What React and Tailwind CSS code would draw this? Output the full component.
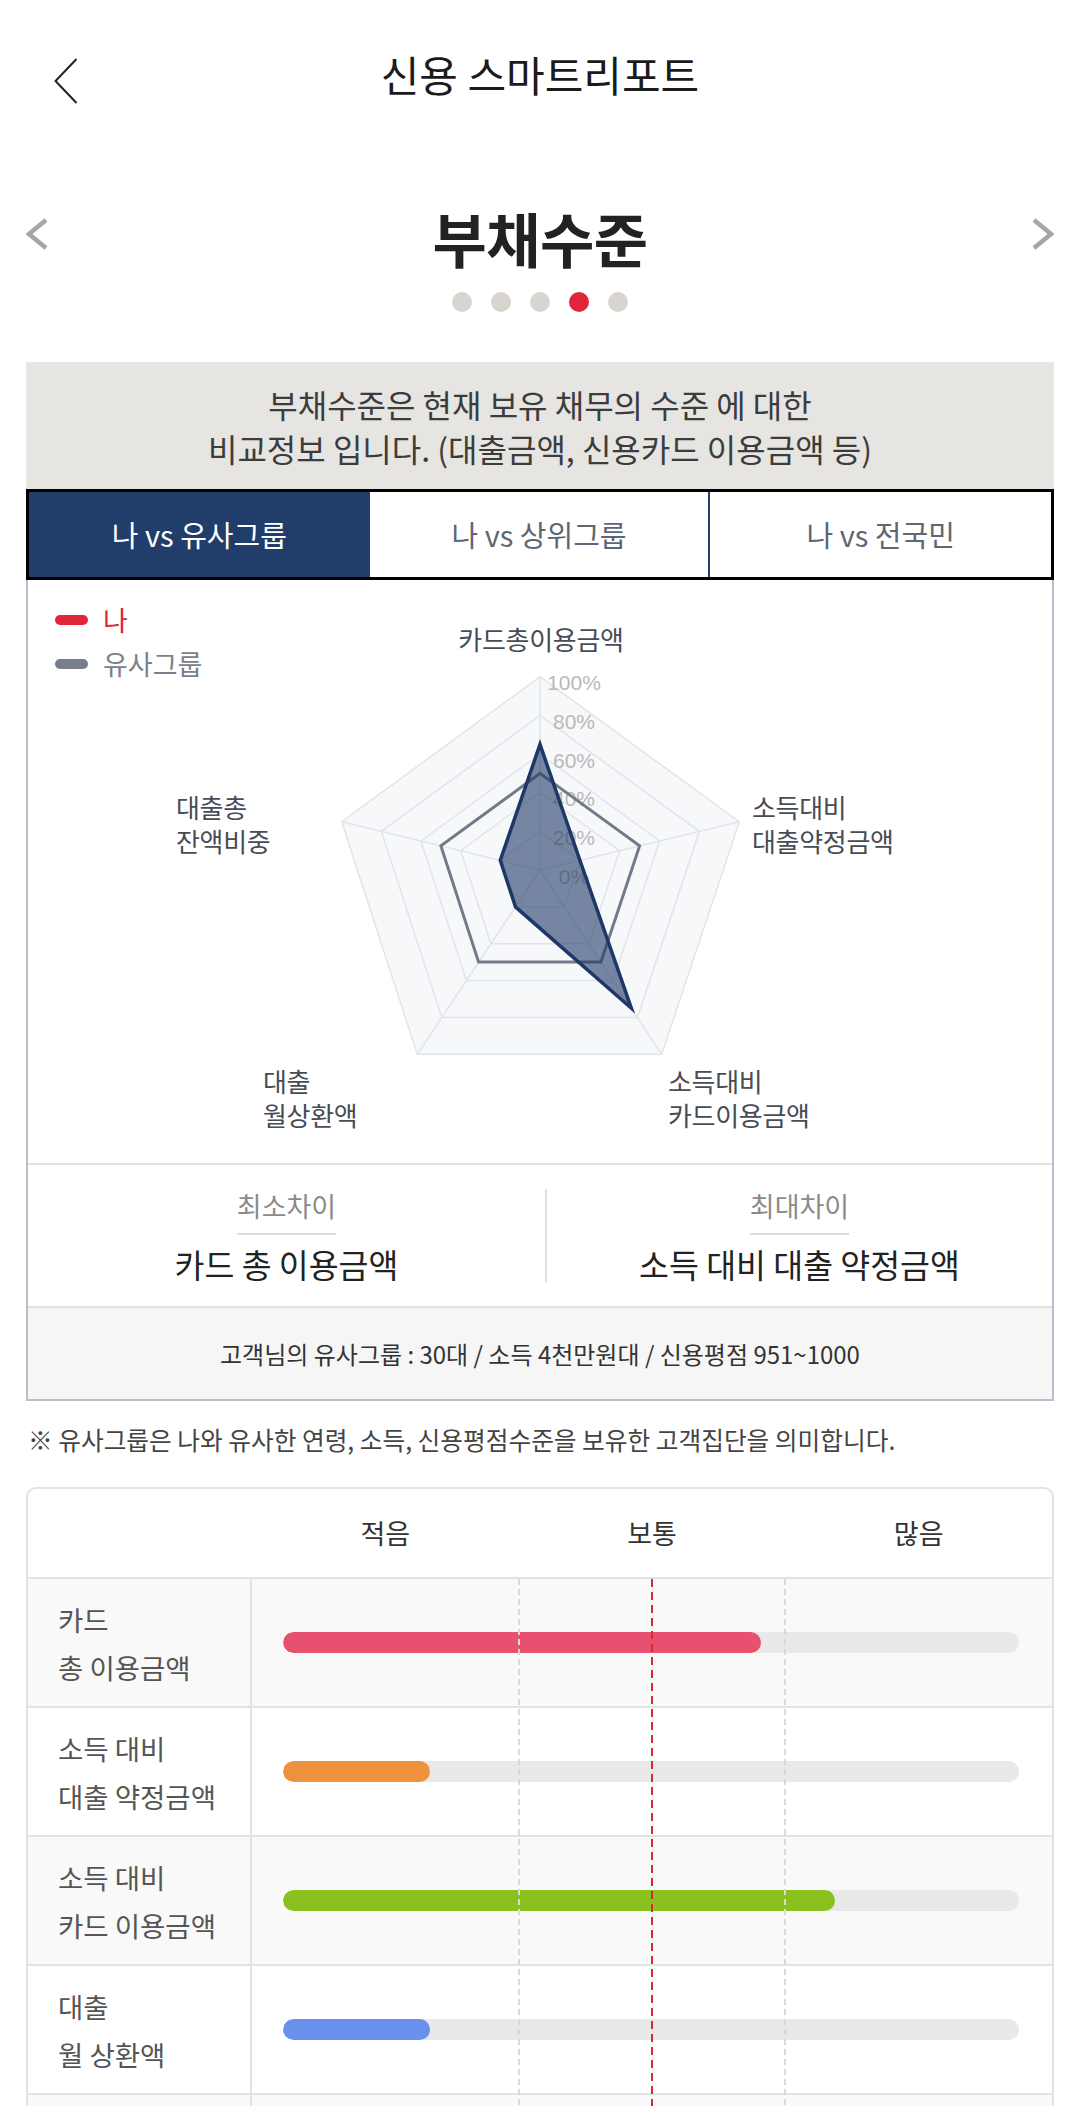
import React from "react";
import clsx from "clsx";

// radar geometry, page coordinates (spokes meet at CENTER)
const CENTER = [540, 870];
const OUTER = [
  [540, 676.7],
  [739.3, 821.7],
  [661.7, 1054.3],
  [417.3, 1054.3],
  [341.7, 821.7],
];

const point = (i, f) => [
  CENTER[0] + (OUTER[i][0] - CENTER[0]) * f,
  CENTER[1] + (OUTER[i][1] - CENTER[1]) * f,
];

const toPoints = (vals) =>
  vals.map((f, i) => point(i, f).map((n) => n.toFixed(1)).join(",")).join(" ");

const MY_VALUES = [0.65, 0.2, 0.75, 0.2, 0.2];
const GROUP_VALUES = [0.5, 0.5, 0.5, 0.5, 0.5];

const AXIS_LABELS = [
  { x: 541, y: 638, lines: ["카드총이용금액"], anchor: "middle" },
  { x: 752, y: 806, lines: ["소득대비", "대출약정금액"] },
  { x: 668, y: 1080, lines: ["소득대비", "카드이용금액"] },
  { x: 263, y: 1080, lines: ["대출", "월상환액"] },
  { x: 176, y: 806, lines: ["대출총", "잔액비중"] },
];

const BARS = [
  { label: ["카드", "총 이용금액"], value: 0.65, color: "bg-[#e8506f]" },
  { label: ["소득 대비", "대출 약정금액"], value: 0.2, color: "bg-[#ef923e]" },
  { label: ["소득 대비", "카드 이용금액"], value: 0.75, color: "bg-[#8bc11f]" },
  { label: ["대출", "월 상환액"], value: 0.2, color: "bg-[#6890ec]" },
  { label: ["대출총", "잔액비중"], value: 0.2, color: "bg-[#9a7bd8]" },
];

const RadarChart = () => {
  const rings = [1, 0.8, 0.6, 0.4, 0.2];
  const ticks = [0, 20, 40, 60, 80, 100];

  return (
    <svg width="1024" height="583" viewBox="28 580 1024 583" className="block">
      <polygon points={toPoints([1, 1, 1, 1, 1])} fill="#f7f8fa" />
      {rings.map((r) => (
        <polygon
          key={r}
          points={toPoints([r, r, r, r, r])}
          fill="none"
          stroke="#e1e4e9"
          strokeWidth="1.5"
        />
      ))}
      {OUTER.map((v, i) => (
        <line
          key={i}
          x1={CENTER[0]}
          y1={CENTER[1]}
          x2={v[0]}
          y2={v[1]}
          stroke="#e1e4e9"
          strokeWidth="1.5"
        />
      ))}
      {ticks.map((t) => (
        <text
          key={t}
          x="574"
          y={870 - (t / 100) * 193.3 + 6}
          textAnchor="middle"
          dominantBaseline="central"
          fontSize="21"
          fill="#b9b9b9"
          fontFamily="'Liberation Sans', Arial, sans-serif"
        >
          {t}%
        </text>
      ))}
      <polygon
        points={toPoints(GROUP_VALUES)}
        fill="none"
        stroke="#737988"
        strokeWidth="3"
      />
      <polygon
        points={toPoints(MY_VALUES)}
        fill="#1f3a68"
        fillOpacity="0.6"
        stroke="#1d3866"
        strokeWidth="3.5"
      />
      {AXIS_LABELS.map((l, i) =>
        l.lines.map((line, j) => (
          <text
            key={`${i}-${j}`}
            x={l.x}
            y={l.y + j * 34}
            textAnchor={l.anchor || "start"}
            dominantBaseline="central"
            fontSize="26"
            letterSpacing="-0.3"
            fill="#474c55"
            fontFamily="'Noto Sans CJK KR', sans-serif"
          >
            {line}
          </text>
        ))
      )}
    </svg>
  );
};

const Legend = () => (
  <div className="absolute left-[27px] top-[18px] flex flex-col text-[27px] leading-[32px]">
    <div className="flex h-[44px] items-center gap-[15px] text-[#e1283a]">
      <span className="h-[10px] w-[33px] rounded-full bg-[#e1283a]" />나
    </div>
    <div className="flex h-[44px] items-center gap-[15px] text-[#7a808c]">
      <span className="h-[10px] w-[33px] rounded-full bg-[#777d8b]" />
      유사그룹
    </div>
  </div>
);

const Compare = ({ label, value, className }) => (
  <div className={clsx("flex flex-col items-center pt-[26px]", className)}>
    <span className="border-b-2 border-[#dcdcdc] pb-[12px] text-[27px] leading-[30px] text-[#8a8a8a]">
      {label}
    </span>
    <span className="mt-[9px] text-[32.5px] leading-[40px] text-[#222]">{value}</span>
  </div>
);

const SideArrow = ({ dir }) => (
  <svg width="22" height="32" viewBox="0 0 22 32" className="mt-[12px] self-start">
    <polyline
      points={dir === "left" ? "20,2 3,16 20,30" : "2,2 19,16 2,30"}
      fill="none"
      stroke="#a6a6a6"
      strokeWidth="4.5"
    />
  </svg>
);

const BarRow = ({ row, index }) => (
  <div
    className={clsx(
      "grid h-[129px] grid-cols-[224px_1fr] border-b-2 border-[#e3e3e3]",
      index % 2 === 0 ? "bg-[#f9f9f9]" : "bg-white"
    )}
  >
    <div className="flex flex-col justify-center border-r-2 border-[#e3e3e3] pl-[30px] text-[27.5px] leading-[48px] text-[#555]">
      <span>{row.label[0]}</span>
      <span>{row.label[1]}</span>
    </div>
    <div className="flex items-center pl-[31px] pr-[33px]">
      <div className="h-[21px] w-full overflow-hidden rounded-full bg-[#e9e9e9]">
        <div
          className={clsx("h-full rounded-full", row.color)}
          style={{ width: `${row.value * 100}%` }}
        />
      </div>
    </div>
  </div>
);

const App = () => {
  return (
    <div className="min-h-screen w-full bg-white font-['Noto_Sans_CJK_KR',sans-serif] text-[#222]">
      <header className="grid h-[156px] grid-cols-[1fr_auto_1fr] items-center">
        <div className="pl-[54px] pt-[6px]">
          <svg width="24" height="46" viewBox="0 0 24 46">
            <polyline points="22.5,1 1.5,23 22.5,45" fill="none" stroke="#222" strokeWidth="2" />
          </svg>
        </div>
        <h1 className="-translate-y-[4px] text-[42px] font-normal leading-[48px] text-[#1b1b1b]">
          신용 스마트리포트
        </h1>
        <div />
      </header>

      <div className="mx-[26px] mt-[50px] flex h-[64px] items-center justify-between">
        <SideArrow dir="left" />
        <h2 className="text-[59px] font-bold leading-[64px] tracking-[-0.01em] text-[#222]">부채수준</h2>
        <SideArrow dir="right" />
      </div>

      <div className="mt-[22px] flex justify-center gap-[19px]">
        {[0, 1, 2, 3, 4].map((i) => (
          <span
            key={i}
            className={clsx(
              "h-[20px] w-[20px] rounded-full",
              i === 3 ? "bg-[#e1263a]" : "bg-[#d8d5d0]"
            )}
          />
        ))}
      </div>

      <div className="mx-[26px] mt-[50px]">
        <div className="flex h-[127px] flex-col items-center justify-center bg-[#e6e5e1] text-center text-[32px] leading-[44px] text-[#3c3c3c]">
          <p>부채수준은 현재 보유 채무의 수준 에 대한</p>
          <p>비교정보 입니다. (대출금액, 신용카드 이용금액 등)</p>
        </div>

        <div className="grid h-[91px] grid-cols-3 border-[3px] border-black text-[29px]">
          <button className="flex items-center justify-center bg-[#213e6b] text-white">나 vs 유사그룹</button>
          <button className="flex items-center justify-center border-r-2 border-[#2b3f63] text-[#5f6673]">
            나 vs 상위그룹
          </button>
          <button className="flex items-center justify-center text-[#5f6673]">나 vs 전국민</button>
        </div>

        <div className="border-x-2 border-b-2 border-[#b9c0cd]">
          <div className="relative h-[583px]">
            <RadarChart />
            <Legend />
          </div>

          <div className="flex h-[143px] border-t-2 border-[#e2e2e2]">
            <Compare label="최소차이" value="카드 총 이용금액" className="w-[517px]" />
            <div className="my-[24px] w-[2px] bg-[#e0e0e0]" />
            <Compare label="최대차이" value="소득 대비 대출 약정금액" className="flex-1" />
          </div>

          <div className="flex h-[93px] items-center justify-center border-t-2 border-[#e2e2e2] bg-[#f6f6f6] text-[24px] text-[#333]">
            고객님의 유사그룹 : 30대 / 소득 4천만원대 / 신용평점 951~1000
          </div>
        </div>
      </div>

      <p className="ml-[28px] mt-[22px] text-[24.7px] leading-[32px] text-[#444]">
        ※ 유사그룹은 나와 유사한 연령, 소득, 신용평점수준을 보유한 고객집단을 의미합니다.
      </p>

      <div className="mx-[26px] mt-[32px] overflow-hidden rounded-[10px] border-2 border-[#e3e3e3]">
        <div className="grid h-[90px] grid-cols-[224px_1fr] border-b-2 border-[#e3e3e3]">
          <div />
          <div className="grid grid-cols-3 items-center text-center text-[27px] text-[#333]">
            <span>적음</span>
            <span>보통</span>
            <span>많음</span>
          </div>
        </div>

        <div className="relative">
          {BARS.map((row, index) => (
            <BarRow key={index} row={row} index={index} />
          ))}
          <div className="pointer-events-none absolute inset-y-0 left-[224px] right-0">
            <div className="absolute inset-y-0 left-1/3 w-[2px] -translate-x-1/2 bg-[repeating-linear-gradient(to_bottom,#d9d9d9_0_6px,transparent_6px_10px)]" />
            <div className="absolute inset-y-0 left-2/3 w-[2px] -translate-x-1/2 bg-[repeating-linear-gradient(to_bottom,#d9d9d9_0_6px,transparent_6px_10px)]" />
            <div className="absolute inset-y-0 left-1/2 w-[2px] -translate-x-1/2 bg-[repeating-linear-gradient(to_bottom,#d42a35_0_8px,transparent_8px_13px)]" />
          </div>
        </div>
      </div>
    </div>
  );
};

export default App;
